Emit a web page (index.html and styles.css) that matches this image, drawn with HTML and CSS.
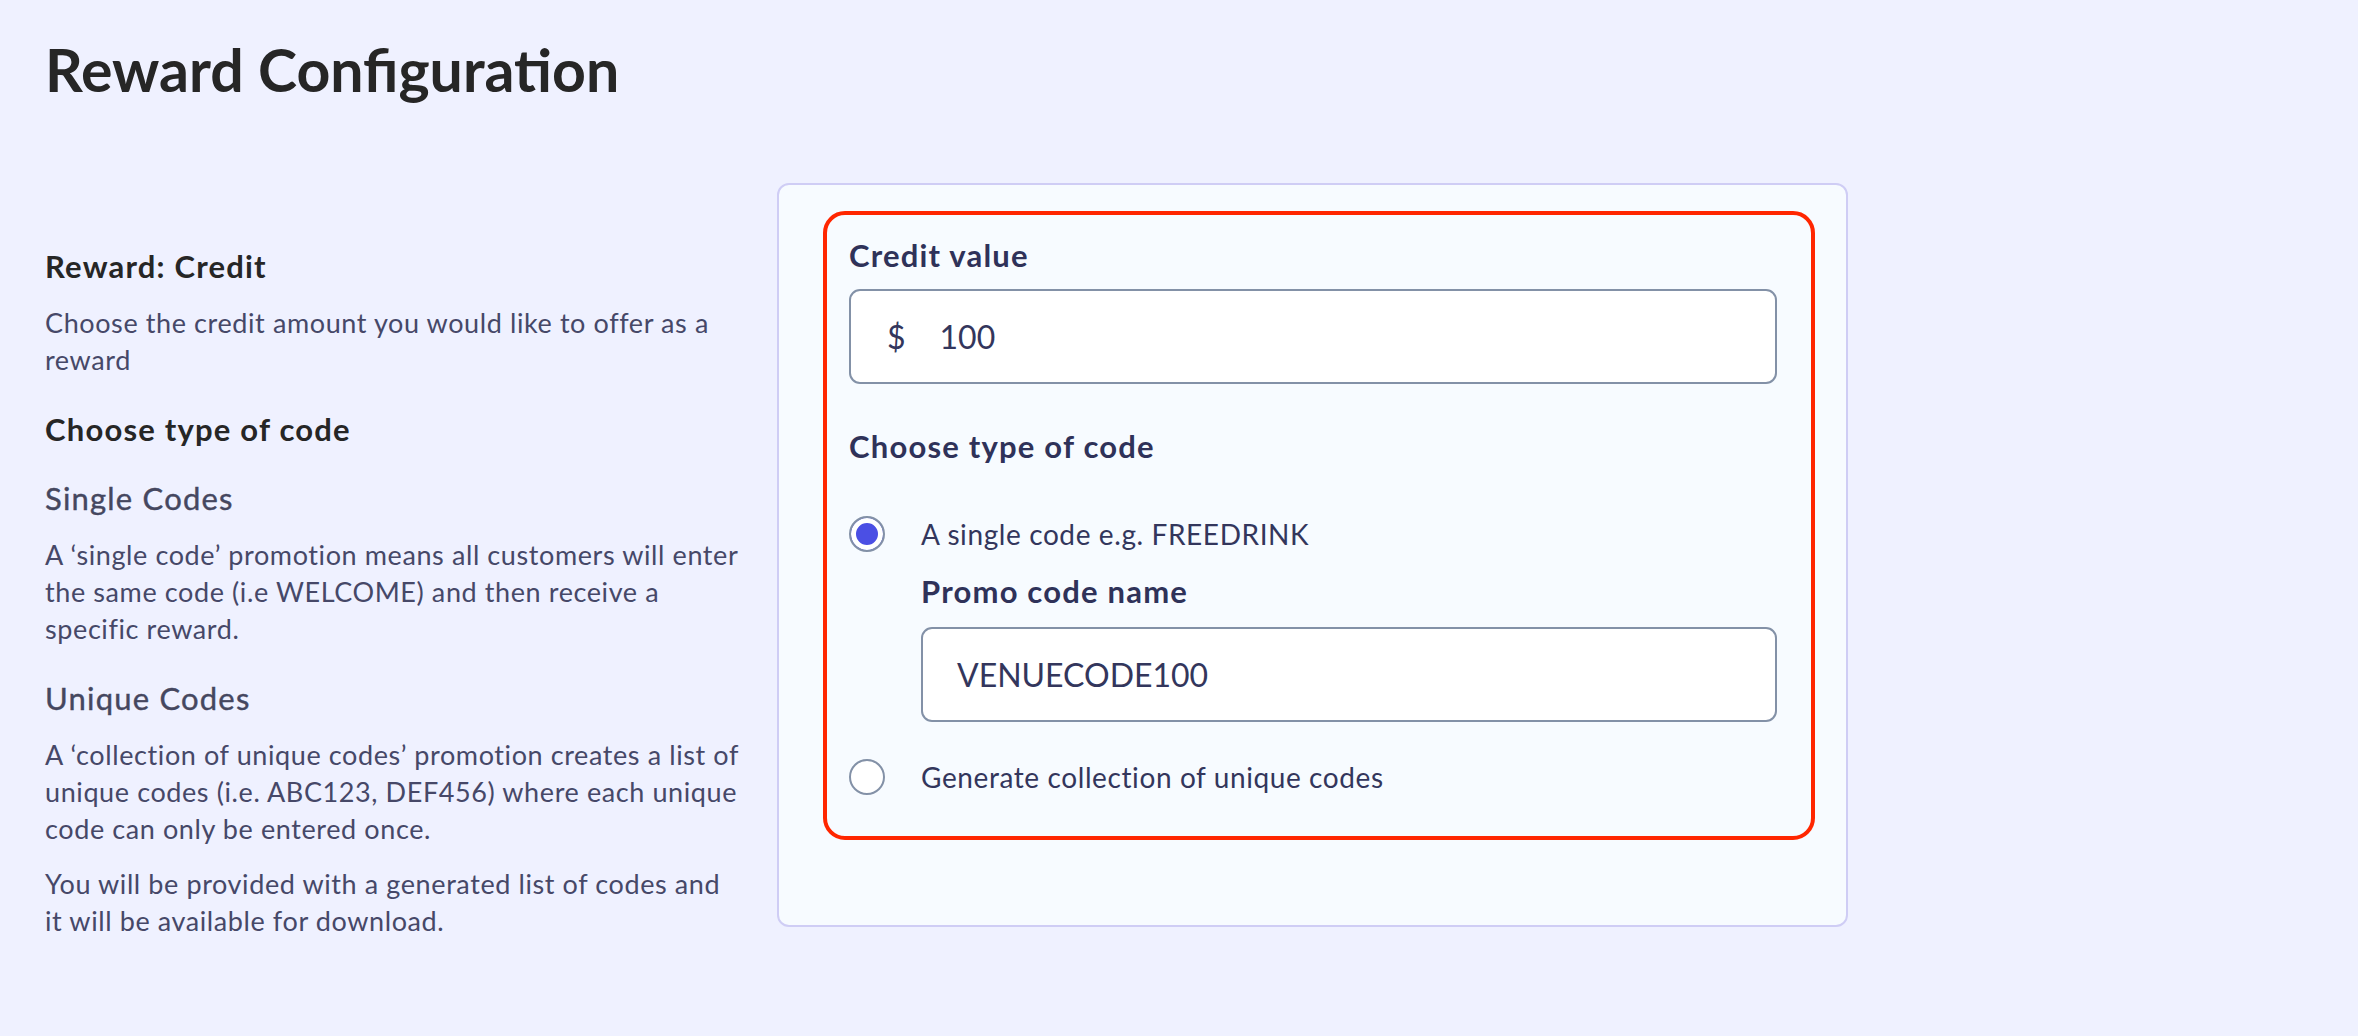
FILE: index.html
```html
<!DOCTYPE html>
<html lang="en">
<head>
  <meta charset="utf-8">
  <title>Reward Configuration</title>
  <link rel="stylesheet" href="styles.css">
</head>
<body>
  <main class="page">
    <h1 class="page-title">Reward Configuration</h1>

    <div class="config">
      <section class="help">
        <h2 class="help-title">Reward: Credit</h2>
        <p class="help-text">Choose the credit amount you would like to offer as a reward</p>

        <h2 class="help-title">Choose type of code</h2>
        <h3 class="help-sub">Single Codes</h3>
        <p class="help-text">A ‘single code’ promotion means all customers will enter the same code (i.e WELCOME) and then receive a specific reward.</p>

        <h3 class="help-sub">Unique Codes</h3>
        <p class="help-text">A ‘collection of unique codes’ promotion creates a list of unique codes (i.e. ABC123, DEF456) where each unique code can only be entered once.</p>
        <p class="help-text help-note">You will be provided with a generated list of codes and it will be available for download.</p>
      </section>

      <div class="card">
        <div class="highlight">
          <label class="field-label">Credit value</label>
          <div class="input">
            <span class="prefix">$</span>
            <span>100</span>
          </div>

          <h3 class="field-label group-title">Choose type of code</h3>

          <div class="radio-row">
            <span class="radio checked"></span>
            <span>A single code e.g. FREEDRINK</span>
          </div>
          <div class="sub-field">
            <label class="field-label">Promo code name</label>
            <div class="input code-input">VENUECODE100</div>
          </div>
          <div class="radio-row">
            <span class="radio"></span>
            <span>Generate collection of unique codes</span>
          </div>
        </div>
      </div>
    </div>
  </main>
</body>
</html>
```

FILE: styles.css
```css
body {
  margin: 0;
  background-color: #eff1ff;
  font-family: Lato, "Open Sans", sans-serif;
  color: #464868;
}
.page {
  padding: 35px 45px;
}
.page-title {
  margin: 0;
  font-size: 59px;
  line-height: 70px;
  font-weight: 700;
  color: #262626;
}
.config {
  display: flex;
  gap: 24px;
  margin-top: 78px;
}
.help {
  width: 708px;
  flex-shrink: 0;
  padding-top: 65px;
}
.help-title {
  margin: 0 0 20px;
  font-size: 31px;
  line-height: 36px;
  letter-spacing: 1.2px;
  font-weight: 700;
  color: #262626;
}
.help-sub {
  margin: 0 0 20px;
  font-size: 31px;
  line-height: 36px;
  letter-spacing: 1.2px;
  font-weight: 400;
  color: #45475f;
  -webkit-text-stroke: 0.4px #45475f;
}
.help-title + .help-sub {
  margin-top: 33px;
}
.help-text {
  margin: 0 0 33px;
  font-size: 27px;
  line-height: 37px;
  letter-spacing: 0.6px;
}
.help-text + .help-text {
  margin-top: -15px;
}
.help-note {
  max-width: 680px;
}
.card {
  width: 1071px;
  box-sizing: border-box;
  height: 744px;
  padding: 26px 31px 0 44px;
  background-color: #f7fbff;
  border: 2px solid #cfcdf5;
  border-radius: 12px;
}
.highlight {
  border: 4px solid #ff2600;
  border-radius: 22px;
  padding: 22px 34px 41px 22px;
  color: #33365c;
  font-size: 28px;
  letter-spacing: 0.6px;
}
.field-label {
  display: block;
  font-size: 31px;
  line-height: 36px;
  letter-spacing: 1.2px;
  font-weight: 700;
  color: #2f3259;
}
.input {
  display: flex;
  align-items: center;
  gap: 34px;
  height: 95px;
  box-sizing: border-box;
  margin-top: 16px;
  padding: 0 36px;
  background: white;
  border: 2px solid #8391a7;
  border-radius: 11px;
  font-size: 32px;
  letter-spacing: 0;
  color: #33365c;
}
.group-title {
  margin: 44px 0 52px;
}
.radio-row {
  display: flex;
  align-items: center;
  gap: 36px;
  height: 36px;
}
.radio {
  width: 36px;
  height: 36px;
  box-sizing: border-box;
  border: 2px solid #8391a7;
  border-radius: 50%;
  background: white;
}
.radio.checked {
  background: #4b4fe4;
  box-shadow: inset 0 0 0 5px white;
}
.sub-field {
  margin: 21px 0 37px 72px;
}
.code-input {
  margin-top: 18px;
  padding: 0 34px;
}
```
